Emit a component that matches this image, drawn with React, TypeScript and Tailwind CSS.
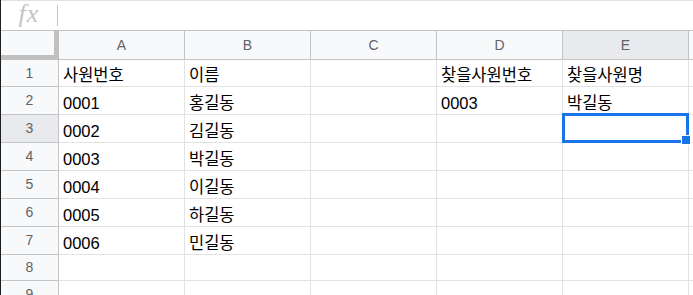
import React from "react";

const cols = ["A", "B", "C", "D", "E"];
const rowH = ["h-[27px]", "h-[28px]", "h-[28px]", "h-[28px]", "h-[28px]", "h-[28px]", "h-[28px]", "h-[26px]", "h-[28px]"];

const data: string[][] = [
  ["사원번호", "이름", "", "찾을사원번호", "찾을사원명", ""],
  ["0001", "홍길동", "", "0003", "박길동", ""],
  ["0002", "김길동", "", "", "", ""],
  ["0003", "박길동", "", "", "", ""],
  ["0004", "이길동", "", "", "", ""],
  ["0005", "하길동", "", "", "", ""],
  ["0006", "민길동", "", "", "", ""],
  ["", "", "", "", "", ""],
  ["", "", "", "", "", ""],
];

export default function App() {
  return (
    <div
      className="w-[693px] h-[295px] overflow-hidden bg-white border-l border-[#1f1f1f]"
      style={{ fontFamily: '"Liberation Sans", "Noto Sans CJK KR", Arial, sans-serif' }}
    >
      {/* formula bar */}
      <div className="h-[31px] border-t border-b border-t-[#e0e0e0] border-b-[#c4c4c4] flex items-center">
        <div className="w-[56px] flex items-center justify-center">
          <span
            className="text-[26px] italic text-[#c4c4c4] leading-none -mt-[3px] tracking-[1px]"
            style={{ fontFamily: '"Liberation Serif", "DejaVu Serif", serif' }}
          >
            fx
          </span>
        </div>
        <div className="w-px h-[21px] bg-[#c4c4c4]" />
      </div>

      {/* grid */}
      <div className="relative">
        <div className="grid grid-cols-[58px_repeat(6,126px)]">
          {/* header row */}
          <div className="h-[29px] bg-[#f8f9fa] border-r-[5px] border-b-[5px] border-[#c0c0c0]" />
          {cols.map((c) => (
            <div
              key={c}
              className={`h-[29px] border-r border-b border-[#c4c4c4] flex items-center justify-center text-[14px] text-[#5f6368] ${
                c === "E" ? "bg-[#e8eaed]" : "bg-[#f8f9fa]"
              }`}
            >
              {c}
            </div>
          ))}
          <div className="h-[29px] border-b border-[#c4c4c4] bg-[#f8f9fa]" />

          {data.map((row, ri) => (
            <React.Fragment key={ri}>
              <div
                className={`${rowH[ri]} border-r border-b border-[#c4c4c4] flex items-center justify-center text-[14px] text-[#5f6368] ${
                  ri === 2 ? "bg-[#e8eaed]" : "bg-[#f8f9fa]"
                }`}
              >
                {ri + 1}
              </div>
              {row.map((cell, ci) => (
                <div
                  key={ci}
                  className={`${rowH[ri]} border-r border-b border-[#e2e2e2] flex items-end pl-[4px] pb-[1px] text-[16.5px] leading-[20px] text-black whitespace-nowrap overflow-hidden`}
                >
                  {cell}
                </div>
              ))}
            </React.Fragment>
          ))}
        </div>

        {/* selection */}
        <div className="absolute left-[561px] top-[82px] w-[127px] h-[30px] border-[3px] border-[#1a73e8]" />
        <div className="absolute left-[680px] top-[104px] w-[10px] h-[10px] bg-[#1a73e8] border border-white" />
      </div>
    </div>
  );
}
